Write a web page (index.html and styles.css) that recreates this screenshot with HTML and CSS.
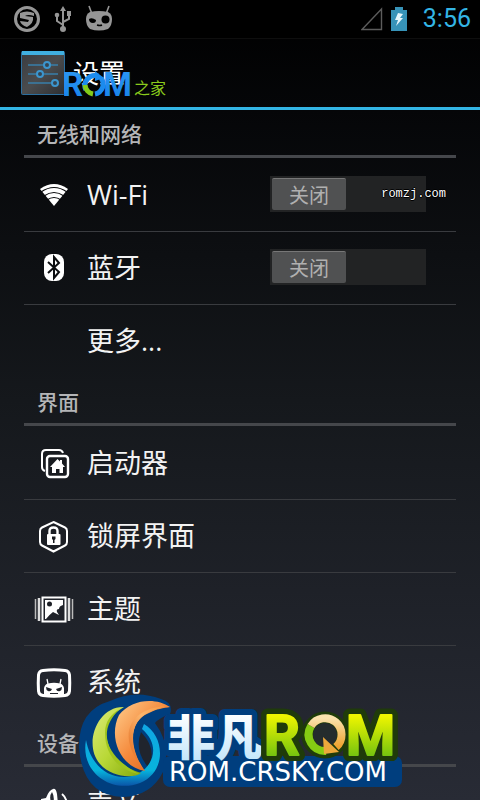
FILE: index.html
```html
<!DOCTYPE html>
<html lang="zh-CN">
<head>
    <meta charset="UTF-8">
    <meta name="viewport" content="width=device-width, initial-scale=1.0">
    <title>设置</title>
    <link rel="stylesheet" href="styles.css">
</head>
<body>
    <div class="screen">
        <div class="status-bar">
            <div class="status-icons">
                <svg width="28" height="28" viewBox="0 0 28 28">
                    <circle cx="14" cy="14" r="11.5" fill="none" stroke="#969696" stroke-width="3"/>
                    <path d="M7 8Q14 5 21 8V11Q15 9 12 11L20 12Q21 18 14 22Q8 20 7 16L15 17L16 15L7 13Z" fill="#969696"/>
                </svg>
                <svg width="18" height="28" viewBox="0 0 18 28">
                    <path d="M9 24V5M9 20L3 16V11M9 17L15 14V9" fill="none" stroke="#969696" stroke-width="2"/>
                    <path d="M9 1L12 6H6ZM13 6H17V11H13Z" fill="#969696"/>
                    <circle cx="3" cy="10" r="2.3" fill="#969696"/>
                    <circle cx="9" cy="24" r="3" fill="#969696"/>
                </svg>
                <svg width="28" height="28" viewBox="0 0 28 28">
                    <path d="M4 1L7 9M24 1L21 9" stroke="#969696" stroke-width="1.6"/>
                    <path d="M5 7Q14 5 23 7Q27 9 27 14Q27 21 23 24Q14 27 5 24Q1 21 1 14Q1 9 5 7Z" fill="#969696"/>
                    <path d="M4 14Q7 12 11 15Q11 18 8 18Q4 18 4 14Z"/>
                    <circle cx="20.5" cy="14.5" r="4"/>
                    <path d="M12 20Q15 21 17 20" fill="none" stroke="#000" stroke-width="1.5"/>
                </svg>
            </div>
            <div class="status-info">
                <svg width="22" height="24" viewBox="0 0 22 24">
                    <path d="M1 22.5L20.5 2V22.5Z" fill="none" stroke="#5c5c5c" stroke-width="1.4"/>
                </svg>
                <svg width="16" height="24" viewBox="0 0 16 24">
                    <path d="M0 3H4V0H12V3H16V24H0Z" fill="#3793b8"/>
                    <path d="M7 6L12 7L9 11H12L5 19L7 13H4Z" fill="#e6f6fc"/>
                </svg>
                <span class="clock">3:56</span>
            </div>
        </div>

        <header class="action-bar">
            <svg class="app-icon" width="44" height="44" viewBox="0 0 44 44">
                <defs>
                    <linearGradient id="tile" x1="0" y1="0" x2="1" y2="1">
                        <stop offset="0" stop-color="#393b3f"/>
                        <stop offset=".5" stop-color="#4a4c4e"/>
                        <stop offset="1" stop-color="#2d2f32"/>
                    </linearGradient>
                </defs>
                <rect x=".5" y=".5" width="43" height="43" rx="1" fill="url(#tile)" stroke="#2c6f9e"/>
                <path d="M1 0H43V4H1Z" fill="#40afe0"/>
                <path d="M7 14H37M7 23H37M7 32H37" stroke="#397fa9" stroke-width="1.5"/>
                <g fill="#344552" stroke="#3c96ce" stroke-width="2">
                    <circle cx="26" cy="14" r="3"/>
                    <circle cx="19" cy="23" r="3"/>
                    <circle cx="34" cy="32" r="3"/>
                </g>
            </svg>
            <h1>设置</h1>
            <svg class="rom-mark" width="108" height="34" viewBox="0 0 108 34">
                <defs>
                    <linearGradient id="sky" x1="0" y1="0" x2="0" y2="1">
                        <stop offset="0" stop-color="#2f9af5"/>
                        <stop offset="1" stop-color="#1480e8"/>
                    </linearGradient>
                </defs>
                <text class="rom-letters" x="-2" y="27" fill="url(#sky)">R</text>
                <path d="M22 21A10 10 0 0 1 34 7" fill="none" stroke="#1c8bed" stroke-width="5"/>
                <path d="M31 2L40 9L31 12Z" fill="#1c8bed"/>
                <path d="M37 9A10 10 0 0 1 31 25" fill="none" stroke="#1c8bed" stroke-width="5"/>
                <path d="M21 16A10 10 0 0 0 29 25" fill="none" stroke="#83cc19" stroke-width="5"/>
                <text class="rom-letters" x="39" y="27" fill="url(#sky)">M</text>
                <text class="rom-home" x="70" y="25">之家</text>
            </svg>
        </header>

        <main class="settings">
            <section>
                <h2>无线和网络</h2>
                <ul>
                    <li class="row">
                        <svg class="icon" viewBox="0 0 40 40">
                            <path d="M20 31L6 14Q20 4 34 14Z" fill="#fff"/>
                            <path d="M7 17Q20 8 33 17M10 21Q20 14 30 21M13 25Q20 20 27 25" fill="none" stroke="#08090b" stroke-width="1.2"/>
                        </svg>
                        <span class="name" id="wifi">Wi-Fi</span>
                        <label class="switch">
                            <input type="checkbox" role="switch" aria-labelledby="wifi">
                            <span>关闭</span>
                        </label>
                        <span class="site-tag">romzj.com</span>
                    </li>
                    <li class="row">
                        <svg class="icon" viewBox="0 0 40 40">
                            <rect x="10" y="6" width="20" height="27" rx="8" fill="#fff"/>
                            <path d="M14 14L25 24L20 30V9L25 15L14 25" fill="none" stroke="#0c0e10" stroke-width="2"/>
                        </svg>
                        <span class="name" id="bluetooth">蓝牙</span>
                        <label class="switch">
                            <input type="checkbox" role="switch" aria-labelledby="bluetooth">
                            <span>关闭</span>
                        </label>
                    </li>
                    <li><a class="row" href="#more">
                        <span class="icon"></span>
                        <span class="name">更多...</span>
                    </a></li>
                </ul>
            </section>

            <section>
                <h2>界面</h2>
                <ul>
                    <li><a class="row" href="#launcher">
                        <svg class="icon" viewBox="0 0 40 40">
                            <path d="M11 28Q8 27 8 24V11Q8 7 12 7H25Q28 7 29 10" fill="none" stroke="#fff" stroke-width="2"/>
                            <rect x="13" y="13" width="21" height="21" rx="3" fill="none" stroke="#fff" stroke-width="2.4"/>
                            <path d="M23.5 16L26 18.5V17H28V20.5L31 24H29V30H25.5V26H22V30H18V24H16Z" fill="#fff"/>
                        </svg>
                        <span class="name">启动器</span>
                    </a></li>
                    <li><a class="row" href="#lockscreen">
                        <svg class="icon" viewBox="0 0 40 40">
                            <path d="M19.5 6L31 11.5Q33 12.5 33 15V26Q33 28.5 31 29.5L19.5 35.5L8 29.5Q6 28.5 6 26V15Q6 12.5 8 11.5Z" fill="none" stroke="#fff" stroke-width="2"/>
                            <path d="M15.5 19V15Q15.5 11.5 19.5 11.5T23.5 15V19" fill="none" stroke="#fff" stroke-width="2.4"/>
                            <rect x="13" y="18" width="13.5" height="11" rx="1" fill="#fff"/>
                            <path d="M18 20.5H21.5V23L20.5 24V27H19V24L18 23Z" fill="#181a1f"/>
                        </svg>
                        <span class="name">锁屏界面</span>
                    </a></li>
                    <li><a class="row" href="#themes">
                        <svg class="icon" viewBox="0 0 40 40">
                            <path d="M1.5 10V30M38.5 10V30" stroke="#bbb" stroke-width="1.5"/>
                            <path d="M5 9V32M35 9V32" stroke="#ddd" stroke-width="2.5"/>
                            <rect x="8.5" y="8.5" width="23" height="24" fill="none" stroke="#fff" stroke-width="2"/>
                            <path d="M11 11H29V16Q25 17 25 20Q22 20 23 23L25 26L19 23Q15 26 12 30H11Z" fill="#fff"/>
                            <circle cx="15.5" cy="15" r="2.5" fill="#1d2026"/>
                        </svg>
                        <span class="name">主题</span>
                    </a></li>
                    <li><a class="row" href="#system">
                        <svg class="icon" viewBox="0 0 40 40">
                            <path d="M9 8.5Q20 7 31 8.5Q35 9 35.5 13Q36 21 35.5 29Q35 33 31 33.5Q20 35 9 33.5Q5 33 4.5 29Q4 21 4.500 13Q5 9 9 8.5Z" fill="none" stroke="#fff" stroke-width="3"/>
                            <path d="M13 17L14 22M27 17L26 22" stroke="#fff" stroke-width="1.3"/>
                            <path d="M10 34V26Q11 22 14 21.5Q20 20 26 21.5Q29 22 30 26V34Z" fill="#fff"/>
                            <path d="M12 25L18 27Q17 30 14 29Q12 28 12 25ZM28 25L22 27Q23 30 26 29Q28 28 28 25ZM16 31H24V32H16Z" fill="#20232a"/>
                        </svg>
                        <span class="name">系统</span>
                    </a></li>
                </ul>
            </section>

            <section>
                <h2>设备</h2>
                <ul>
                    <li><a class="row" href="#sound">
                        <svg class="icon" viewBox="0 0 40 40">
                            <path d="M7 15L12 14Q15 6 19 5Q22 4 23 10L24 20V32L7 26Z" fill="#fff"/>
                            <path d="M18 8Q15 12 17 18L19 20Q21 13 18 8Z" fill="#272a33"/>
                            <path d="M28 10Q33 14 33 22" fill="none" stroke="#fff" stroke-width="2"/>
                        </svg>
                        <span class="name">声音</span>
                    </a></li>
                </ul>
            </section>
        </main>

        <svg class="crsky-logo" width="330" height="110" viewBox="0 0 330 110">
            <defs>
                <linearGradient id="orange" x1="0" y1="0" x2="1" y2="1">
                    <stop offset="0" stop-color="#ffcf8f"/>
                    <stop offset=".5" stop-color="#f58a3c"/>
                    <stop offset="1" stop-color="#d95a14"/>
                </linearGradient>
                <linearGradient id="peach" x1="1" y1="0" x2="0" y2="1">
                    <stop offset="0" stop-color="#f79a45"/>
                    <stop offset=".4" stop-color="#fbb56d"/>
                    <stop offset="1" stop-color="#e06519"/>
                </linearGradient>
                <linearGradient id="lime" x1="0" y1="0" x2="1" y2="1">
                    <stop offset="0" stop-color="#dcea7a"/>
                    <stop offset=".5" stop-color="#b9d837"/>
                    <stop offset="1" stop-color="#84a90e"/>
                </linearGradient>
                <linearGradient id="ring" x1="0" y1="0" x2="0" y2="1">
                    <stop offset="0" stop-color="#10a5e4"/>
                    <stop offset=".75" stop-color="#07b3dc"/>
                    <stop offset="1" stop-color="#0a55a8"/>
                </linearGradient>
                <linearGradient id="ice" x1="0" y1="0" x2="0" y2="1">
                    <stop offset=".2" stop-color="#fff"/>
                    <stop offset="1" stop-color="#b9e2fa"/>
                </linearGradient>
                <linearGradient id="leaf" x1="0" y1="0" x2="0" y2="1">
                    <stop offset=".2" stop-color="#eef500"/>
                    <stop offset=".85" stop-color="#6cc010"/>
                </linearGradient>
                <linearGradient id="gold" x1="0" y1="0" x2="0" y2="1">
                    <stop offset="0" stop-color="#fbe3ad"/>
                    <stop offset="1" stop-color="#efa22e"/>
                </linearGradient>
            </defs>
            <path d="M4 58Q3 20 35 11Q60 -1 86 9Q99 13 95 24Q84 28 80 33Q97 56 88 82Q76 106 48 107Q8 106 4 58Z" fill="#003e7e"/>
            <path d="M66 42Q83 60 73 77Q59 60 66 42Z" fill="#20242d"/>
            <path d="M69 34C90 46 92 82 65 93C36 104 5 82 11 50C16 77 36 91 57 86C78 80 87 56 67 39Z" fill="url(#ring)"/>
            <path d="M49 17C22 16 8 55 25 74C36 87 58 89 66 83C46 77 32 63 31 43C31 31 37 24 49 17Z" fill="url(#lime)"/>
            <path d="M45 19C23 39 28 65 64 84C42 80 30 63 30 43C30 31 36 24 45 19Z" fill="#a0c51d"/>
            <path d="M95 17C81 7 56 9 44 25C33 47 45 77 70 81C53 57 54 31 74 23C81 19 89 18 95 17Z" fill="url(#orange)"/>
            <path d="M90 16C55 19 40 45 69 80C52 56 54 29 77 21Z" fill="url(#peach)"/>
            <rect x="88" y="66" width="239" height="31" rx="7" fill="#003e7e"/>
            <text class="crsky-cn" x="92" y="65" fill="url(#ice)">非凡</text>
            <g class="halo">
                <text class="crsky-rom" x="189" y="65">R</text>
                <circle cx="250" cy="45" r="17"/>
                <text class="crsky-rom" x="271" y="65">M</text>
            </g>
            <g class="leaf">
                <text class="crsky-rom" x="189" y="65">R</text>
                <text class="crsky-rom" x="271" y="65">M</text>
            </g>
            <circle cx="250" cy="45" r="12" fill="#252c2d"/>
            <path d="M236 36A16.5 16.5 0 0 0 251 61" fill="none" stroke="#85cb13" stroke-width="8"/>
            <path d="M236 36A16.5 16.5 0 1 1 261 57" fill="none" stroke="url(#gold)" stroke-width="8"/>
            <path d="M248 47L264 62L249 64Z" fill="#eda93b"/>
            <rect x="94" y="71" width="230" height="22" fill="#003e7e"/>
            <text class="crsky-url" x="94" y="91">ROM.CRSKY.COM</text>
        </svg>
    </div>
</body>
</html>
```

FILE: styles.css
```css
* {
    box-sizing: border-box;
}
body {
    margin: 0;
    background-color: #000;
    color: #f3f3f3;
    font-family: "Open Sans", "Noto Sans CJK SC", sans-serif;
}
.screen {
    position: relative;
    height: 100vh;
    overflow: hidden;
    background: linear-gradient(#000 0, #050608 110px, #15181c 50%, #282b35 100%);
}
svg {
    display: block;
    flex: none;
}

/* status bar */
.status-bar {
    display: flex;
    justify-content: space-between;
    align-items: center;
    height: 39px;
    padding: 0 9px 0 13px;
    background-color: #000;
    border-bottom: 1px solid #0e0e0e;
}
.status-icons {
    display: flex;
    gap: 13px;
}
.status-info {
    display: flex;
    align-items: center;
    gap: 8px;
}
.clock {
    margin-left: 8px;
    color: #33b5e5;
    font-family: Roboto, sans-serif;
    font-size: 25px;
    line-height: 38px;
}

/* action bar */
.action-bar {
    position: relative;
    display: flex;
    align-items: center;
    gap: 8px;
    height: 71px;
    padding-left: 21px;
    border-bottom: 3px solid #33b5e5;
}
h1 {
    margin: 0;
    color: #fff;
    font-size: 26px;
    font-weight: normal;
    line-height: 40px;
}
.rom-mark {
    position: absolute;
    left: 64px;
    bottom: 4px;
}
.rom-letters {
    font: bold 33px Roboto, sans-serif;
}
.rom-home {
    fill: #8acb1c;
    font: 16px "Noto Sans CJK SC", sans-serif;
}

/* list */
.settings {
    padding: 0 24px;
}
h2 {
    margin: 0 0 1px;
    padding: 4px 13px 0;
    height: 48px;
    border-bottom: 3px solid #45474b;
    color: #b4b5b7;
    font-size: 21px;
    font-weight: 500;
    line-height: 41px;
}
ul {
    margin: 0;
    padding: 0;
    list-style: none;
}
.row {
    position: relative;
    display: flex;
    align-items: center;
    height: 73px;
    padding: 0 30px 0 10px;
    border-bottom: 1px solid #393b3f;
    color: inherit;
    text-decoration: none;
}
li:last-child .row {
    border-bottom-color: transparent;
}
.icon {
    flex: none;
    width: 40px;
    height: 40px;
    margin-right: 13px;
}
.name {
    flex: 1;
    font-size: 27px;
    line-height: 40px;
}

/* on/off switch */
.switch {
    position: relative;
    width: 156px;
    height: 36px;
    margin-bottom: 2px;
}
.switch input {
    display: block;
    appearance: none;
    width: 100%;
    height: 100%;
    margin: 0;
    background-color: #222324;
}
.switch span {
    position: absolute;
    top: 2px;
    left: 2px;
    width: 74px;
    height: 32px;
    border-top: 1px solid #777;
    border-radius: 2px;
    background-color: #505152;
    color: #b0b0b0;
    font-size: 20px;
    line-height: 34px;
    text-align: center;
}
.switch input:checked + span {
    left: 80px;
}

/* site marks */
.site-tag {
    position: absolute;
    right: 10px;
    top: 27px;
    color: #fff;
    font: 12px/16px "Liberation Mono", monospace;
    text-shadow: 1px 0 #000, -1px 0 #000, 0 1px #000, 0 -1px #000;
}
.crsky-logo {
    position: absolute;
    left: calc(50% - 165px);
    bottom: 0;
}
.crsky-cn {
    font: 900 48px "Noto Sans CJK SC", sans-serif;
    stroke: #003e7e;
    stroke-width: 12px;
    stroke-linejoin: round;
    paint-order: stroke;
}
.crsky-rom {
    font: bold 56px Roboto, sans-serif;
}
.halo {
    fill: #1f3b0a;
    stroke: #1f3b0a;
    stroke-width: 13px;
    stroke-linejoin: round;
}
.leaf {
    fill: url(#leaf);
    stroke: url(#leaf);
    stroke-width: 2px;
    stroke-linejoin: round;
}
.crsky-url {
    fill: #fff;
    font: 26px "DejaVu Sans", sans-serif;
}
```
